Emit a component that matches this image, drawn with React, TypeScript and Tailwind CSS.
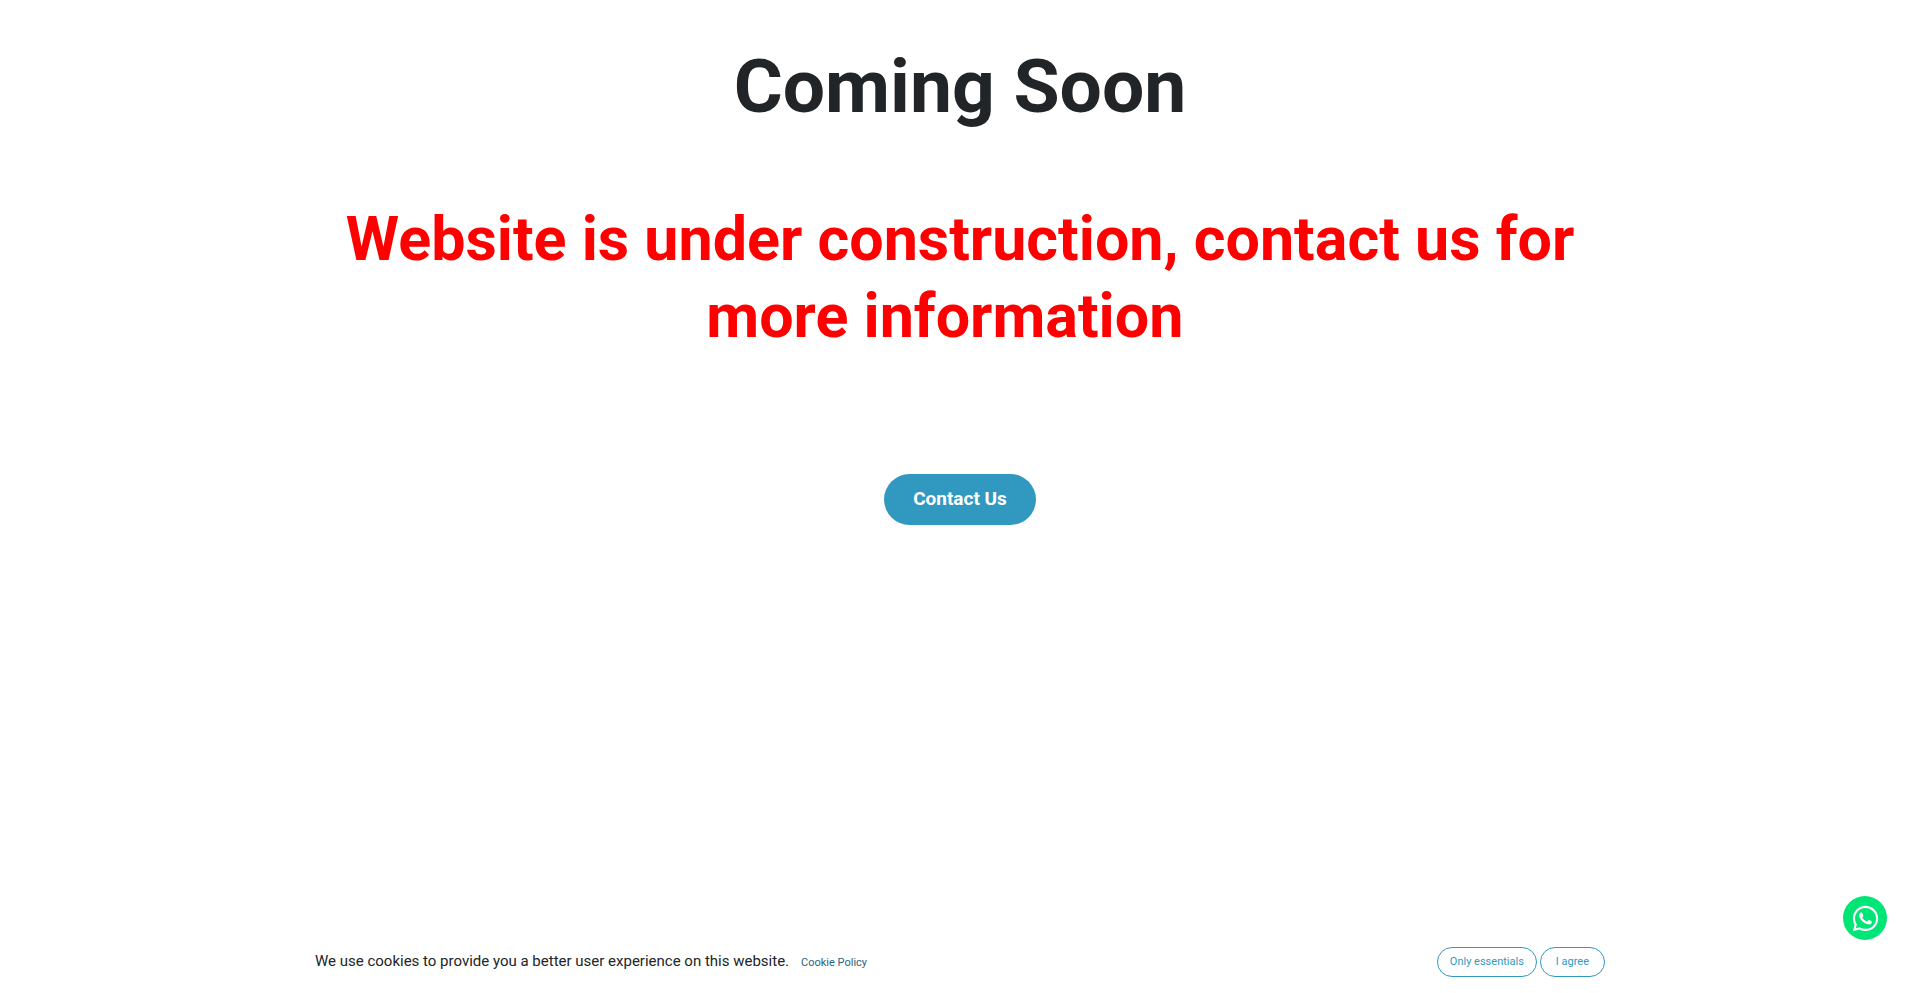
import React, { useState } from "react";
import { FaWhatsapp } from "react-icons/fa";

const CookieBar = ({ onClose }: { onClose: () => void }) => {
  return (
    <div className="fixed bottom-0 inset-x-0 bg-white">
      <div className="max-w-[1320px] mx-auto px-[15px] py-4 flex items-center justify-between gap-4">
        <p className="text-[15px] leading-6 text-[#212527]">
          We use cookies to provide you a better user experience on this website.
          <a href="#cookie-policy" className="ml-3 text-[11px] text-[#1f6680]">
            Cookie Policy
          </a>
        </p>
        <div className="flex gap-[3px] shrink-0">
          <button
            className="h-[30px] px-3 text-[11px] text-[#3199bf] border border-[#3199bf] rounded-full"
            onClick={onClose}
          >
            Only essentials
          </button>
          <button
            className="h-[30px] px-[15px] text-[11px] text-[#3199bf] border border-[#3199bf] rounded-full"
            onClick={onClose}
          >
            I agree
          </button>
        </div>
      </div>
    </div>
  );
};

const App = () => {
  const [showCookies, setShowCookies] = useState(true);

  return (
    <div className="min-h-screen bg-white font-['Roboto',sans-serif]">
      <main className="max-w-[1320px] mx-auto px-[15px] pt-[38px] flex flex-col items-center text-center">
        <h1 className="text-[75px] leading-[96px] font-bold text-[#212527]">
          Coming Soon
        </h1>
        <h2 className="mt-[67px] text-[61px] leading-[77px] font-bold text-[#ff0000]">
          Website is under construction, contact us for more
          information&nbsp;&nbsp;
        </h2>
        <a
          href="#contact"
          className="mt-[119px] h-[51px] px-[29px] flex items-center bg-[#3199bf] rounded-full text-[19px] font-bold text-white"
        >
          Contact Us
        </a>
      </main>

      <a
        href="#whatsapp"
        aria-label="WhatsApp"
        className="fixed right-[33px] bottom-[53px] z-10 size-11 flex items-center justify-center rounded-full bg-[#00e676] text-white"
      >
        <FaWhatsapp size={29} />
      </a>

      {showCookies && <CookieBar onClose={() => setShowCookies(false)} />}
    </div>
  );
};

export default App;
